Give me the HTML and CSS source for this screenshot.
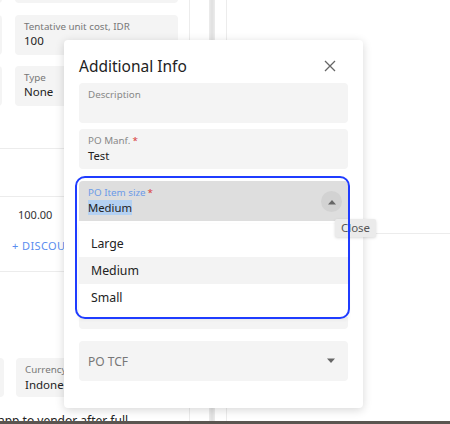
FILE: index.html
```html
<!DOCTYPE html>
<html lang="en">
<head>
    <meta charset="UTF-8">
    <meta name="viewport" content="width=device-width, initial-scale=1.0">
    <title>Additional Info</title>
    <link rel="stylesheet" href="styles.css">
</head>
<body>
    <!-- page behind the dialog -->
    <div class="page">
        <div class="left-col">
            <div class="card-row first">
                <div class="card stub"></div>
                <div class="card"></div>
            </div>
            <div class="card-row">
                <div class="card stub"></div>
                <div class="card">
                    <div class="card-label">Tentative unit cost, IDR</div>
                    <div class="card-value">100</div>
                </div>
            </div>
            <div class="card-row">
                <div class="card stub"></div>
                <div class="card">
                    <div class="card-label">Type</div>
                    <div class="card-value">None</div>
                </div>
            </div>

            <div class="section s1"></div>
            <div class="section s2">
                <div class="amount">100.00</div>
                <div class="discount">+ DISCOUNT</div>
            </div>
            <div class="section s3">
                <div class="card-row bottom">
                    <div class="card stub wide"></div>
                    <div class="card">
                        <div class="card-label">Currency</div>
                        <div class="card-value">Indonesian Rupiah</div>
                    </div>
                </div>
            </div>
            <div class="footnote">app to vendor after full</div>
        </div>
        <div class="gutter">
            <div class="scrollbar"></div>
        </div>
        <div class="right-col">
            <div class="right-line"></div>
        </div>
    </div>
    <div class="taskbar"></div>

    <!-- dialog -->
    <div class="modal">
        <div class="modal-head">
            <h2 class="modal-title">Additional Info</h2>
            <svg class="close-icon" width="12" height="12" viewBox="0 0 12 12">
                <path d="M1 1 L11 11 M11 1 L1 11" stroke="#666" stroke-width="1.3" fill="none"/>
            </svg>
        </div>

        <div class="field">
            <div class="field-label">Description</div>
        </div>
        <div class="field">
            <div class="field-label">PO Manf.<span class="req">*</span></div>
            <div class="field-value">Test</div>
        </div>
        <div class="field focused">
            <div class="field-label blue">PO Item size<span class="req">*</span></div>
            <div class="field-value"><span class="selected-text">Medium</span></div>
            <div class="arrow-btn">
                <svg width="10" height="6" viewBox="0 0 10 6"><path d="M1 5.5 L5 1 L9 5.5 Z" fill="#666"/></svg>
            </div>
        </div>
        <div class="field tall"></div>
        <div class="field select">
            <div class="placeholder">PO TCF</div>
            <svg width="10" height="6" viewBox="0 0 10 6"><path d="M1 0.5 L9 0.5 L5 5 Z" fill="#666"/></svg>
        </div>

        <!-- open dropdown list -->
        <div class="menu">
            <div class="menu-item">Large</div>
            <div class="menu-item hover">Medium</div>
            <div class="menu-item">Small</div>
        </div>

        <div class="tooltip">Close</div>
        <div class="ring"></div>
    </div>
</body>
</html>
```

FILE: styles.css
```css
/* page */
body {
    margin: 0;
    width: 450px;
    height: 424px;
    overflow: hidden;
    position: relative;
    background: #fff;
    font-family: "Noto Sans", "Open Sans", sans-serif;
    color: #222;
}

.page {
    display: flex;
    height: 421px;
    overflow: hidden;
}

.taskbar {
    height: 3px;
    background: #5a5550;
}

/* left column behind the modal */
.left-col {
    width: 189px;
    border-right: 1px solid #ececec;
    overflow: hidden;
    flex-shrink: 0;
}

.card-row {
    display: flex;
    gap: 13px;
    height: 40px;
    margin-top: 11px;
}

.card-row.first {
    margin-top: -37px;
}

.card-row:nth-child(2) {
    margin-top: 12px;
}

.card {
    background: #f4f4f4;
    border-radius: 4px;
    width: 163px;
    flex-shrink: 0;
    box-sizing: border-box;
    padding: 6px 9px 0;
    white-space: nowrap;
    overflow: hidden;
}

.card.stub {
    width: 40px;
    margin-left: -38px;
}

.card-label {
    font-size: 9.8px;
    color: #777;
    line-height: 12px;
}

.card-value {
    font-size: 11.5px;
    line-height: 16px;
    color: #222;
}

.section {
    border-top: 1px solid #ececec;
}

.s1 {
    margin-top: 42px;
    height: 47px;
}

.s2 {
    height: 74px;
}

.amount {
    font-size: 11px;
    color: #333;
    padding: 9px 0 0 18px;
    line-height: 18px;
}

.discount {
    font-size: 11px;
    color: #5b8def;
    letter-spacing: 0.4px;
    padding: 14px 0 0 12px;
    line-height: 16px;
    white-space: nowrap;
}

.card-row.bottom {
    margin-top: 86px;
    height: 39px;
    gap: 12px;
}

.card.stub.wide {
    margin-left: -36px;
}

.bottom .card {
    padding-top: 6px;
}

.bottom .card-value {
    line-height: 17px;
}

.footnote {
    font-size: 12px;
    white-space: nowrap;
    margin-top: 16px;
    margin-left: -2px;
    line-height: 16px;
    color: #222;
}

.gutter {
    width: 36px;
    flex-shrink: 0;
}

.scrollbar {
    width: 6px;
    height: 100%;
    margin-left: 19px;
    background: linear-gradient(to right, #ececec, #e0e0e0, #ececec);
}

.right-col {
    flex: 1;
    border-left: 1px solid #ececec;
}

.right-line {
    margin-top: 233px;
    border-top: 1px solid #ececec;
}

/* modal */
.modal {
    position: absolute;
    left: 64px;
    top: 40px;
    width: 299px;
    height: 368px;
    box-sizing: border-box;
    padding: 15px 15px 0;
    background: #fff;
    border-radius: 4px;
    box-shadow: 0 2px 10px rgba(0, 0, 0, 0.16);
}

.modal-head {
    height: 22px;
    margin-bottom: 6px;
    display: flex;
    align-items: center;
    justify-content: space-between;
}

.modal-title {
    margin: 0;
    font-size: 15.5px;
    font-weight: 400;
    color: #222;
}

.close-icon {
    margin-right: 12px;
}

.field {
    position: relative;
    height: 40px;
    background: #f4f4f4;
    border-radius: 4px;
    margin-bottom: 6px;
    box-sizing: border-box;
    padding: 6px 9px 0;
}

.field:nth-of-type(3) {
    margin-bottom: 12px;
}

.field-label {
    font-size: 9.8px;
    line-height: 12px;
    color: #888;
}

.field-label.blue {
    color: #6c9be8;
}

.req {
    color: #d93a3a;
    margin-left: 2px;
}

.field-value {
    font-size: 11.3px;
    line-height: 18px;
    color: #222;
}

.field.focused {
    background: #dedede;
    border-radius: 4px 4px 0 0;
    margin-bottom: 6px;
}

.selected-text {
    background: #b4d1f2;
}

.arrow-btn {
    position: absolute;
    right: 6px;
    top: 10px;
    width: 21px;
    height: 21px;
    border-radius: 50%;
    background: #d2d2d2;
    display: flex;
    align-items: center;
    justify-content: center;
}

.field.tall {
    height: 102px;
    margin-bottom: 12px;
}

.field.select {
    display: flex;
    align-items: center;
    justify-content: space-between;
    padding: 0 12px 0 9px;
}

.placeholder {
    font-size: 12px;
    color: #777;
}

/* dropdown */
.menu {
    position: absolute;
    left: 15px;
    top: 184px;
    width: 269px;
    padding: 6px 0;
    background: #fff;
    box-shadow: 0 2px 4px rgba(0, 0, 0, 0.08);
}

.menu-item {
    height: 27px;
    line-height: 27px;
    padding-left: 12px;
    font-size: 12.3px;
    color: #222;
}

.menu-item.hover {
    background: #f3f3f3;
}

.tooltip {
    position: absolute;
    left: 271px;
    top: 179px;
    width: 41px;
    height: 18px;
    line-height: 18px;
    text-align: center;
    font-size: 11.5px;
    color: #555;
    background: #ebebeb;
    border-radius: 2px;
    box-shadow: 0 1px 3px rgba(0, 0, 0, 0.15);
}

.ring {
    position: absolute;
    left: 11px;
    top: 136px;
    width: 275px;
    height: 143px;
    box-sizing: border-box;
    border: 2px solid #1f3cff;
    border-radius: 10px;
}
```
